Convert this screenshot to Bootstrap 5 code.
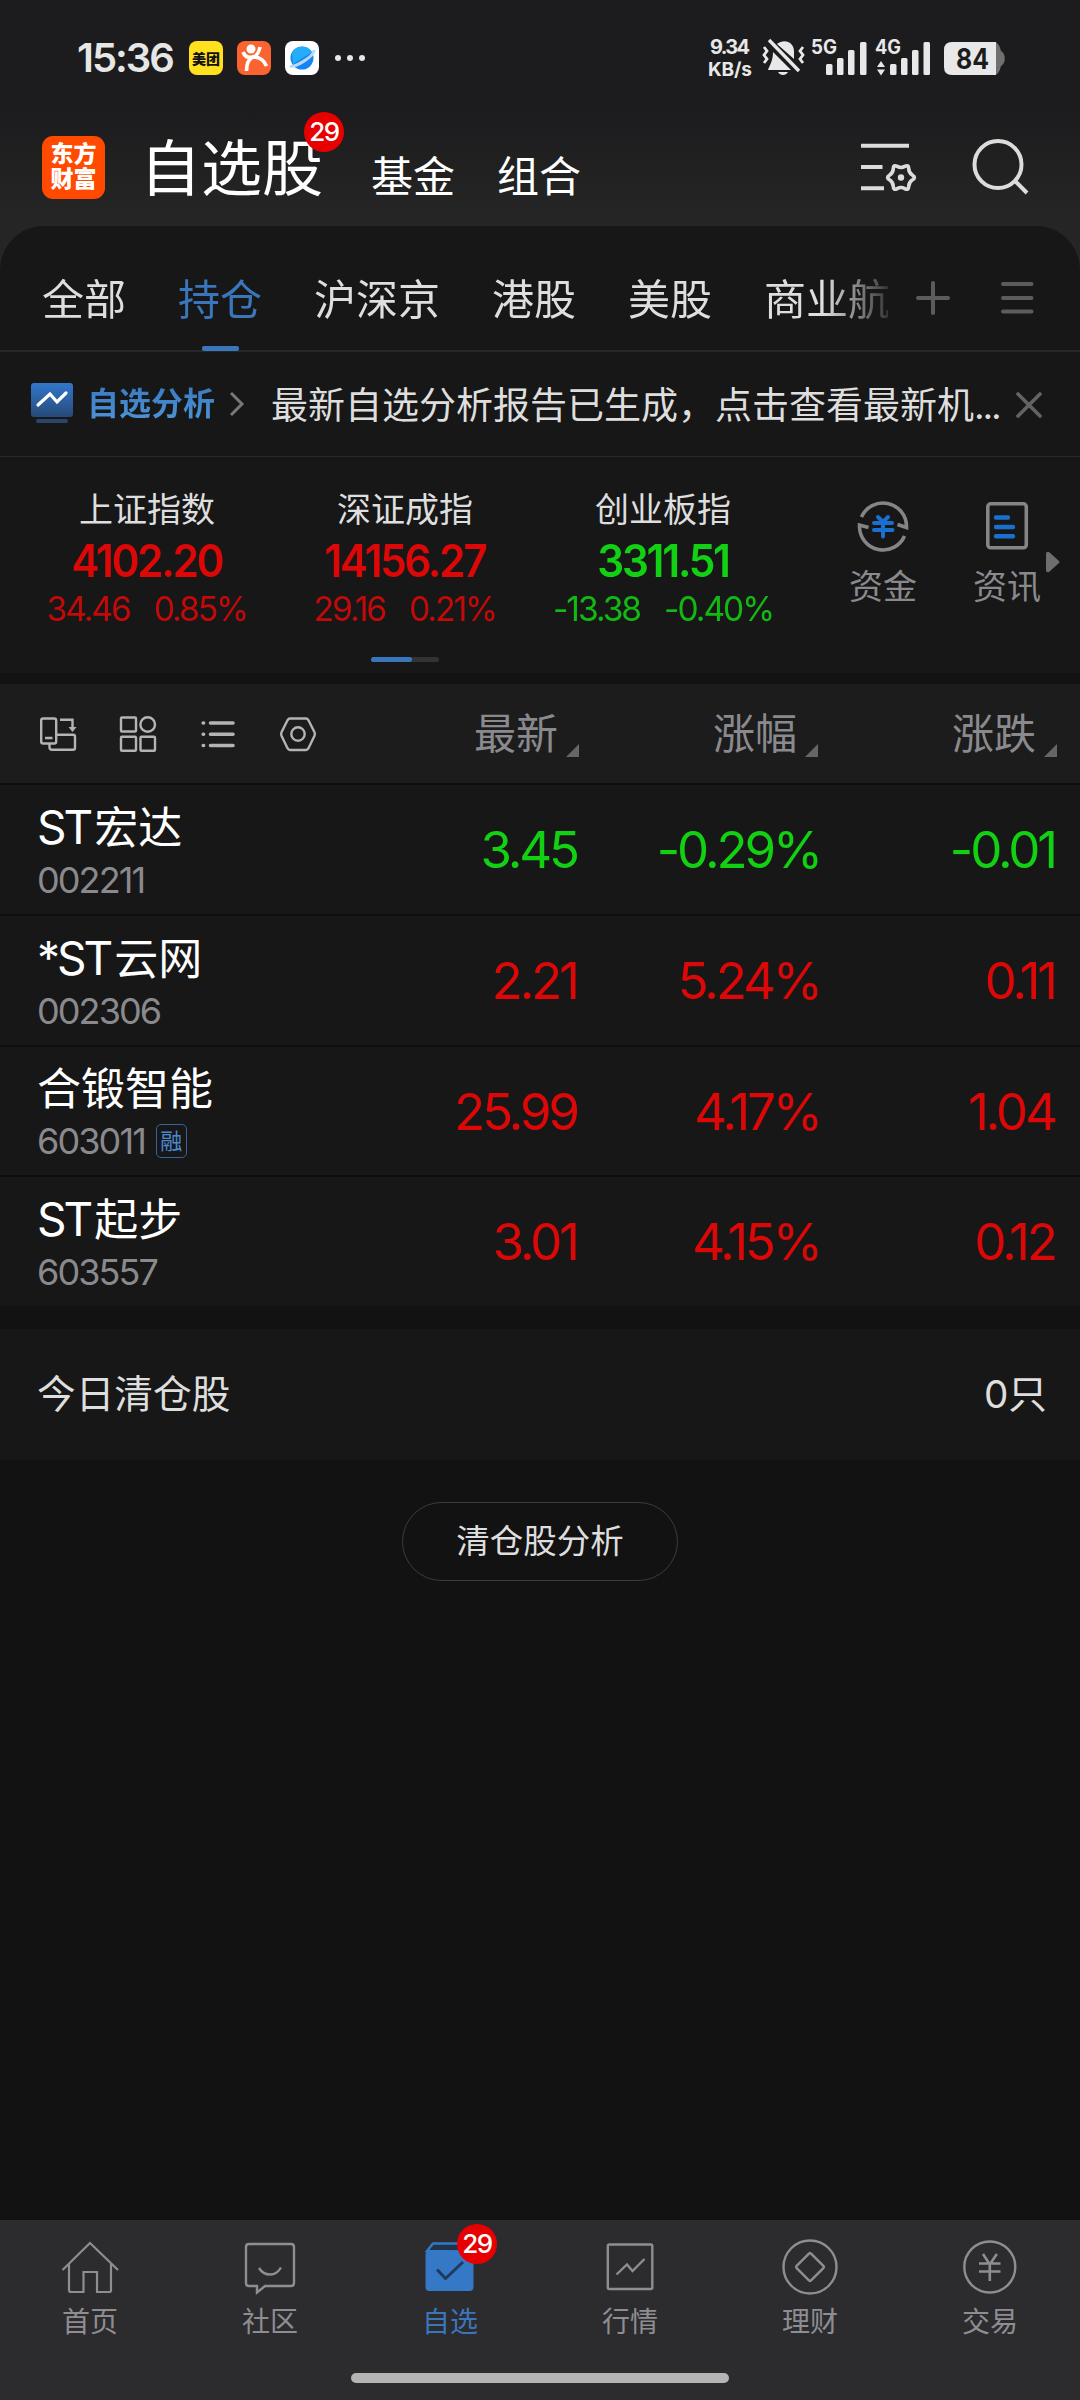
<!DOCTYPE html>
<html lang="zh-CN" data-bs-theme="dark">
<head>
<meta charset="utf-8">
<meta name="viewport" content="width=device-width, initial-scale=1">
<title>自选股</title>
<link href="https://cdn.jsdelivr.net/npm/bootstrap@5.3.0/dist/css/bootstrap.min.css" rel="stylesheet">
<style>
:root{--up:#dc0808;--down:#12d012;--blue:#3a76bb;--panel:#171717;--txt:#dedede;--dim:#8a8a8e}
body{width:1080px;height:2400px;margin:0;overflow:hidden;background:#121212;color:var(--txt);font-family:Inter,"Noto Sans CJK SC",sans-serif;font-size:42px;line-height:1;font-feature-settings:"pnum"}
svg{display:block;flex:none;overflow:visible}
.top-area{height:270px;margin-bottom:-44px;background:linear-gradient(#1c1c1e 0,#1c1c1e 110px,#252525 215px,#262626)}
.status{height:116px;padding:0 75px 0 77px}
.clock{font-size:40px;font-weight:600;letter-spacing:-2px;width:112px;color:#e6e6e6}
.app-bar{height:102px;padding:0 50px 0 42px;color:#fff}
.app-bar .side{margin-left:42px;padding-top:19px}
.logo{width:63px;height:63px;border-radius:11px;background:#ff4a00;font-size:23px;font-weight:900;line-height:25px;padding-top:6px;text-align:center}
.title{font-size:61px;margin:3px 0 0 35px;line-height:64px}
.count{width:40px;height:40px;border-radius:50%;background:#e80000;color:#fff;font-size:26px;line-height:39px;font-weight:500;text-align:center;letter-spacing:-1.5px}
.title .count{top:-25px;right:-21px}
.sheet{position:relative;border-radius:44px 44px 0 0;background:var(--panel)}
.tabs{height:126px;border-bottom:2px solid #282828;padding-left:42px}
.tab-strip{width:846px;gap:52px;overflow:hidden;white-space:nowrap;-webkit-mask-image:linear-gradient(90deg,#000 782px,transparent 858px);mask-image:linear-gradient(90deg,#000 782px,transparent 858px);height:125px}
.tab-strip>div{flex:none;line-height:84px;padding-top:32px;height:125px}
.tab-on{color:var(--blue)}
.tab-strip .tab-on:after{content:"";display:block;width:37px;height:5px;border-radius:2px;background:var(--blue);margin:4px auto 0}
.notice{height:105px;border-bottom:1px solid #2a2a2a;padding-left:31px}
.notice-name{font-size:32px;font-weight:700;margin-left:13px;background:linear-gradient(#3a78c0,#4d97d8);-webkit-background-clip:text;background-clip:text;color:transparent;width:129px;white-space:nowrap;line-height:40px}
.notice-msg{font-size:37px;width:728px;white-space:nowrap;margin-left:27px;padding-top:3px;line-height:50px}
.dots{letter-spacing:-2.2px}
.indices{height:216px;padding-left:18px}
.idx{width:258px;padding-top:34px;text-align:center}
.idx .nm{font-size:34px;line-height:38px}
.idx .pt{font-size:45px;font-weight:600;line-height:50px;margin-top:7px;letter-spacing:-2.4px;transform:scaleX(.94)}
.idx .dl{font-size:33.5px;line-height:38px;margin-top:4px;opacity:.88;gap:24px;letter-spacing:-2px;white-space:nowrap}
.up{color:var(--up)}.down{color:var(--down)}
.quick{font-size:34px;color:var(--dim);width:124px;padding-top:41px}
.quick svg{margin-bottom:16px}
.pager{width:68px;height:5px;border-radius:3px;background:#333;top:200px;left:371px}
.pager i{display:block;width:41px;height:5px;border-radius:3px;background:var(--blue)}
.more{top:94px;left:1045px}
.tools{margin-top:11px;height:99px;background:#1c1c1c;padding-left:39px;color:var(--dim)}
.sorter{line-height:98px;gap:8px;justify-content:flex-end}
.sorter svg{margin-top:34px}
.c1{width:241px}.c2{width:239px}.c3{width:239px}
.num.c2{width:243px}.num.c3{width:235px}
.stock{height:130.8px;border-top:2px solid #0e0e0e;background:var(--panel);padding-left:37px}
.ident{width:299px;padding-top:19px}
.nm2{font-size:44px;line-height:46px;color:#fff;white-space:nowrap}
.latin{font-size:46px;letter-spacing:-3px;margin-right:4px;display:inline-block;line-height:46px}
.code{font-size:36px;line-height:36px;margin-top:11px;color:var(--dim);letter-spacing:-1.9px;gap:11px}
.tag{width:31px;height:34px;border:1px solid #35659a;border-radius:5px;color:#4a8ad0;font-size:22px;line-height:32px;text-align:center;letter-spacing:0}
.num{font-size:51px;line-height:130px;text-align:right;letter-spacing:-3.1px}
.cleared{margin-top:23px;height:131px;background:var(--panel);padding:0 33px 0 37px;font-size:38.7px}
.btn-an{margin-top:42px;width:276px;height:79px;border:1px solid #3c3c3c;border-radius:40px;color:var(--txt);font-size:33.5px;padding:0;line-height:1}
.bottom{height:180px;background:#2c2c2e;color:#8e8e92}
.bottom .item{width:180px;font-size:28px;padding-top:18px}
.bottom .item svg{margin-bottom:12px}
.bottom .count{top:-14px;left:36px}
.handle{width:378px;height:10px;border-radius:5px;background:#b4b4b4;bottom:17px;left:351px}
</style>
</head>
<body class="d-flex flex-column">
<header class="top-area flex-shrink-0">
  <div class="status d-flex align-items-center">
    <div class="clock">15:36</div>
    <svg width="180" height="34" viewBox="0 0 180 34">
      <rect width="34" height="34" rx="8" fill="#ffe11e"/>
      <text x="3" y="23" font-size="14" font-weight="900" fill="#111" textLength="28">美团</text>
      <g transform="translate(48)"><rect width="34" height="34" rx="8" fill="#fb6430"/><circle cx="14" cy="8" r="4.5" fill="#fff"/><path d="M6 11c2 5 6 6 10 5 4-1 6-5 7-10M9.500 30c0-8 2-11 6-14 6 0 11 2 14 9" fill="none" stroke="#fff" stroke-width="3.600"/></g>
      <g transform="translate(96)"><rect width="34" height="34" rx="8" fill="#fff"/><circle cx="17" cy="17" r="11.5" fill="#1684f5"/><path d="M7 12a11.500 11.500 0 0 1 20-1L8 23z" fill="#22aefa"/><path d="M5 25c4 2 24-9 24-16" fill="none" stroke="#b9d8fb" stroke-width="3"/></g>
      <g fill="#e6e6e6"><circle cx="149" cy="17" r="3"/><circle cx="161" cy="17" r="3"/><circle cx="173" cy="17" r="3"/></g>
    </svg>
    <svg class="ms-auto" width="298" height="42" viewBox="707 36 298 42" fill="#e8e8e8" font-weight="700">
      <text x="710" y="53" font-size="20" textLength="40">9.34</text>
      <text x="708" y="75" font-size="19" textLength="44">KB/s</text>
      <path d="M777 43c8-6 17-1 17 7v8z M773 51l18 18h-23c1-4 5-8 5-18zM778 71h10c-2 4-8 4-10 0z"/>
      <path d="M769 39l30 31" stroke="#e8e8e8" stroke-width="3.400"/>
      <path d="M764 46l3 4-3 4 3 4-3 4M803 46l-3 4 3 4-3 4 3 4" fill="none" stroke="#e8e8e8" stroke-width="2.800"/>
      <text x="811" y="53" font-size="19.500" textLength="26" lengthAdjust="spacingAndGlyphs">5G</text>
      <rect x="826" y="63" width="6.500" height="11" rx="1.500"/><rect x="837" y="57" width="6.500" height="17" rx="1.500"/><rect x="848" y="49" width="6.500" height="25" rx="1.500"/><rect x="860" y="41" width="6.500" height="33" rx="1.500"/>
      <text x="875" y="53" font-size="19.500" textLength="26" lengthAdjust="spacingAndGlyphs">4G</text>
      <path d="M877 66l4-6 4 6zM877 68.500l4 6 4-6z"/>
      <rect x="890" y="63" width="6.500" height="11" rx="1.500"/><rect x="901" y="57" width="6.500" height="17" rx="1.500"/><rect x="912" y="49" width="6.500" height="25" rx="1.500"/><rect x="923.500" y="41" width="6.500" height="33" rx="1.500"/>
      <path d="M990 41h4q5 0 7 9c5 2 5 13 0 15q-2 9-7 9h-4z" fill="#707070"/>
      <path d="M952 41h44v33h-44q-8 0-8-8V49q0-8 8-8z"/>
      <text x="956" y="68" font-size="28" fill="#1c1c1e" textLength="33" lengthAdjust="spacingAndGlyphs">84</text>
    </svg>
  </div>
  <div class="app-bar d-flex align-items-center position-relative">
    <div class="logo">东方<br>财富</div>
    <div class="title position-relative">自选股<span class="count position-absolute">29</span></div>
    <div class="side ms-5">基金</div>
    <div class="side">组合</div>
    <svg class="ms-auto" width="58" height="52" viewBox="860 141 58 52" fill="none" stroke="#dcdcdc" stroke-width="4"><path d="M861 145.700h48M861 167h21.500M861 188.300h23"/><path transform="translate(901 177.500) scale(.9)" d="M12.830-2.500Q17 0 12.830 2.500T8.580 9.850T4.250 12.350T-4.250 12.350T-8.580 9.850T-12.830 2.500T-12.830-2.500T-8.580-9.850T-4.250-12.350T4.250-12.350T8.580-9.850T12.830-2.500Z"/><circle cx="901" cy="177.500" r="3.200" fill="#dcdcdc" stroke="none"/></svg>
    <svg style="margin-left:54px" width="58" height="58" viewBox="972 138 58 58" fill="none" stroke="#dcdcdc" stroke-width="4"><circle cx="998" cy="164.500" r="23.500"/><path d="M1015 181l12 12"/></svg>
  </div>
</header>

<main class="flex-shrink-0">
  <section class="sheet">
    <div class="tabs d-flex align-items-center">
      <div class="tab-strip d-flex">
        <div>全部</div><div class="tab-on">持仓</div><div>沪深京</div><div>港股</div><div>美股</div><div>商业航天</div>
      </div>
      <svg style="margin:20px 0 0 27px" width="120" height="36" viewBox="915 281 120 36" stroke="#5c5c5c" stroke-width="4" stroke-linecap="round"><path d="M918 299h30M933 284v30M1003 285h28.500M1003 299h28.500M1003 312.500h28.500"/></svg>
    </div>
    <div class="notice d-flex align-items-center">
      <svg width="43" height="42" viewBox="0 0 43 42"><defs><linearGradient id="g" x2="0" y2="1"><stop stop-color="#3277cc"/><stop offset="1" stop-color="#264a78"/></linearGradient></defs><rect width="42" height="34" rx="3" fill="url(#g)"/><rect x="5" y="36" width="32" height="4" rx="2" fill="#2b4469"/><path d="M7 22l12-11 7 8L35 10" fill="none" stroke="#fff" stroke-width="3.200" stroke-linecap="round"/></svg>
      <div class="notice-name">自选分析</div>
      <svg style="margin-left:13px" width="15" height="26" viewBox="0 0 15 26" fill="none" stroke="#777" stroke-width="3"><path d="M2 2l11 11L2 24"/></svg>
      <div class="notice-msg">最新自选分析报告已生成，点击查看最新机<span class="dots">...</span></div>
      <svg style="margin:2px 0 0 16px" width="28" height="28" viewBox="0 0 28 28" stroke="#636363" stroke-width="3.600" stroke-linecap="round"><path d="M3 3l22 22M25 3L3 25"/></svg>
    </div>
    <div class="indices d-flex position-relative">
      <div class="idx"><div class="nm">上证指数</div><div class="pt up">4102.20</div><div class="dl up d-flex justify-content-center"><span>34.46</span><span>0.85%</span></div></div>
      <div class="idx"><div class="nm">深证成指</div><div class="pt up">14156.27</div><div class="dl up d-flex justify-content-center"><span>29.16</span><span>0.21%</span></div></div>
      <div class="idx"><div class="nm">创业板指</div><div class="pt down">3311.51</div><div class="dl down d-flex justify-content-center"><span>-13.38</span><span>-0.40%</span></div></div>
      <div class="quick d-flex flex-column align-items-center" style="margin-left:29px">
        <svg width="56" height="56" viewBox="855 499 56 56" fill="none" stroke="#858585" stroke-width="3.600"><path d="M861.500 518a23.500 23.500 0 0 1 45 9v1.500l-9-3M904.500 537a23.500 23.500 0 0 1-45-9v-2l9 2.500"/><path d="M878 518l5 5 5-5M874 524h18M874 531h18.500M883 524v13.500" stroke="#1a70d0" stroke-width="4" stroke-linecap="round"/></svg>
        <div>资金</div></div>
      <div class="quick d-flex flex-column align-items-center">
        <svg width="56" height="56" viewBox="979 499 56 56" fill="none" stroke="#858585" stroke-width="3.600"><rect x="987.800" y="504.800" width="38.500" height="44" rx="3"/><path d="M996 518.500h12M996 528h17M996 537.300h17" stroke="#1a70d0" stroke-width="4.400" stroke-linecap="round"/></svg>
        <div>资讯</div></div>
      <svg class="more position-absolute" width="16" height="22" viewBox="0 0 16 22"><path d="M1 3q0-3 3-2l10 9q1 1 0 2l-10 9q-3 1-3-2z" fill="#6e6e6e"/></svg>
      <div class="pager position-absolute"><i></i></div>
    </div>
  </section>

  <section class="tools d-flex">
    <div class="d-flex align-items-center" style="width:299px;gap:42px">
      <svg width="38" height="38" viewBox="39 714 38 38" fill="none" stroke="#b4b4b4" stroke-width="2.400"><rect x="41.200" y="717.500" width="15" height="25" rx="2"/><path d="M45 737h7.500M60 718.800h12.500v8M57 733.800h16q2 0 2 2v11q0 2-2 2H52q-2.500 0-2.500-2.500V743"/><path d="M68.500 726h8l-4 5z" fill="#b4b4b4" stroke="none"/></svg>
      <svg width="38" height="38" viewBox="119 714 38 38" fill="none" stroke="#b4b4b4" stroke-width="2.400"><rect x="121" y="716.500" width="15" height="14" rx="1"/><circle cx="147.700" cy="723.500" r="7.300"/><rect x="121" y="735.800" width="15" height="14" rx="1"/><rect x="140.500" y="735.800" width="14.500" height="14" rx="1"/></svg>
      <svg width="38" height="38" viewBox="199 714 38 38" stroke="#b4b4b4" stroke-width="3.600" stroke-linecap="round"><path d="M210.500 722h22.500M210.500 733.300h22.500M210.500 744.500h22.500M203.200 722h.4M203.200 733.300h.4M203.200 744.500h.4"/></svg>
      <svg width="38" height="38" viewBox="279 714 38 38" fill="none" stroke="#b4b4b4" stroke-width="2.400"><path d="M290 717.500h16q1.500 0 2.500 1.800l6 12q.8 1.700 0 3.400l-6 12.500q-1 1.800-2.500 1.800h-16q-1.500 0-2.500-1.800l-6-12.500q-.8-1.700 0-3.400l6-12q1-1.800 2.500-1.800z"/><circle cx="298" cy="733" r="6.700"/></svg>
    </div>
    <div class="c1 sorter d-flex align-items-center">最新<svg width="13" height="13"><path d="M13 0v13H0z" fill="#666"/></svg></div>
    <div class="c2 sorter d-flex align-items-center">涨幅<svg width="13" height="13"><path d="M13 0v13H0z" fill="#666"/></svg></div>
    <div class="c3 sorter d-flex align-items-center">涨跌<svg width="13" height="13"><path d="M13 0v13H0z" fill="#666"/></svg></div>
  </section>

  <section>
    <div class="stock d-flex"><div class="ident"><div class="nm2"><span class="latin">ST</span>宏达</div><div class="code">002211</div></div><div class="num c1 down">3.45</div><div class="num c2 down">-0.29%</div><div class="num c3 down">-0.01</div></div>
    <div class="stock d-flex"><div class="ident"><div class="nm2"><span class="latin">*ST</span>云网</div><div class="code">002306</div></div><div class="num c1 up">2.21</div><div class="num c2 up">5.24%</div><div class="num c3 up">0.11</div></div>
    <div class="stock d-flex"><div class="ident"><div class="nm2">合锻智能</div><div class="code d-flex align-items-center">603011<span class="tag">融</span></div></div><div class="num c1 up">25.99</div><div class="num c2 up">4.17%</div><div class="num c3 up">1.04</div></div>
    <div class="stock d-flex"><div class="ident"><div class="nm2"><span class="latin">ST</span>起步</div><div class="code">603557</div></div><div class="num c1 up">3.01</div><div class="num c2 up">4.15%</div><div class="num c3 up">0.12</div></div>
  </section>

  <section class="cleared d-flex justify-content-between align-items-center"><span>今日清仓股</span><span>0只</span></section>
  <button class="btn btn-an d-block mx-auto">清仓股分析</button>
</main>

<nav class="bottom d-flex mt-auto flex-shrink-0 position-relative">
  <div class="item d-flex flex-column align-items-center"><svg width="58" height="58" viewBox="61 2238 58 58" fill="none" stroke="#8e8e92" stroke-width="2.200"><path d="M62.500 2270L90 2243l28 27M69 2264v26q0 2 2 2h12.500v-20h13.500v20h12.500q1.500 0 1.500-2v-26"/></svg>首页</div>
  <div class="item d-flex flex-column align-items-center"><svg width="58" height="58" viewBox="241 2238 58 58" fill="none" stroke="#8e8e92" stroke-width="2.400"><path d="M249 2244h42q3 0 3 3v36q0 3-3 3h-26l-8 6.500v-6.500h-8q-3 0-3-3v-36q0-3 3-3zM259 2268q4 6.500 11 6.500t11-7"/></svg>社区</div>
  <div class="item tab-on d-flex flex-column align-items-center"><div class="position-relative"><svg width="58" height="58" viewBox="421 2238 58 58"><path d="M427 2251l6-7.500h35v8z" fill="#20334a" stroke="#3478c6" stroke-width="2.400"/><rect x="425.500" y="2251" width="48" height="40" rx="4" fill="#3478c6"/><path d="M437 2269.500l8.500 9L463 2262" fill="none" stroke="#1f3a5c" stroke-width="3"/></svg><span class="count position-absolute">29</span></div>自选</div>
  <div class="item d-flex flex-column align-items-center"><svg width="58" height="58" viewBox="601 2238 58 58" fill="none" stroke="#8e8e92" stroke-width="2.400"><rect x="607.800" y="2244.500" width="44.500" height="44.500" rx="1.500"/><path d="M616.500 2274.500l10.500-10 5.500 6.500 12-12"/></svg>行情</div>
  <div class="item d-flex flex-column align-items-center"><svg width="58" height="58" viewBox="781 2238 58 58" fill="none" stroke="#8e8e92" stroke-width="2.400"><circle cx="810" cy="2267" r="26.500"/><rect x="799.800" y="2256.800" width="20.400" height="20.400" rx="1.500" transform="rotate(45 810 2267)"/></svg>理财</div>
  <div class="item d-flex flex-column align-items-center"><svg width="58" height="58" viewBox="961 2238 58 58" fill="none" stroke="#8e8e92" stroke-width="2.400"><circle cx="989.800" cy="2267" r="25.500"/><path d="M983 2254l6.800 10.500 7-10.500M979 2263.500h21.500M979 2271.500h21.500M989.800 2264v17" stroke-width="2.600"/></svg>交易</div>
  <div class="handle position-absolute"></div>
</nav>
<script src="https://cdn.jsdelivr.net/npm/bootstrap@5.3.0/dist/js/bootstrap.bundle.min.js"></script>
</body>
</html>
